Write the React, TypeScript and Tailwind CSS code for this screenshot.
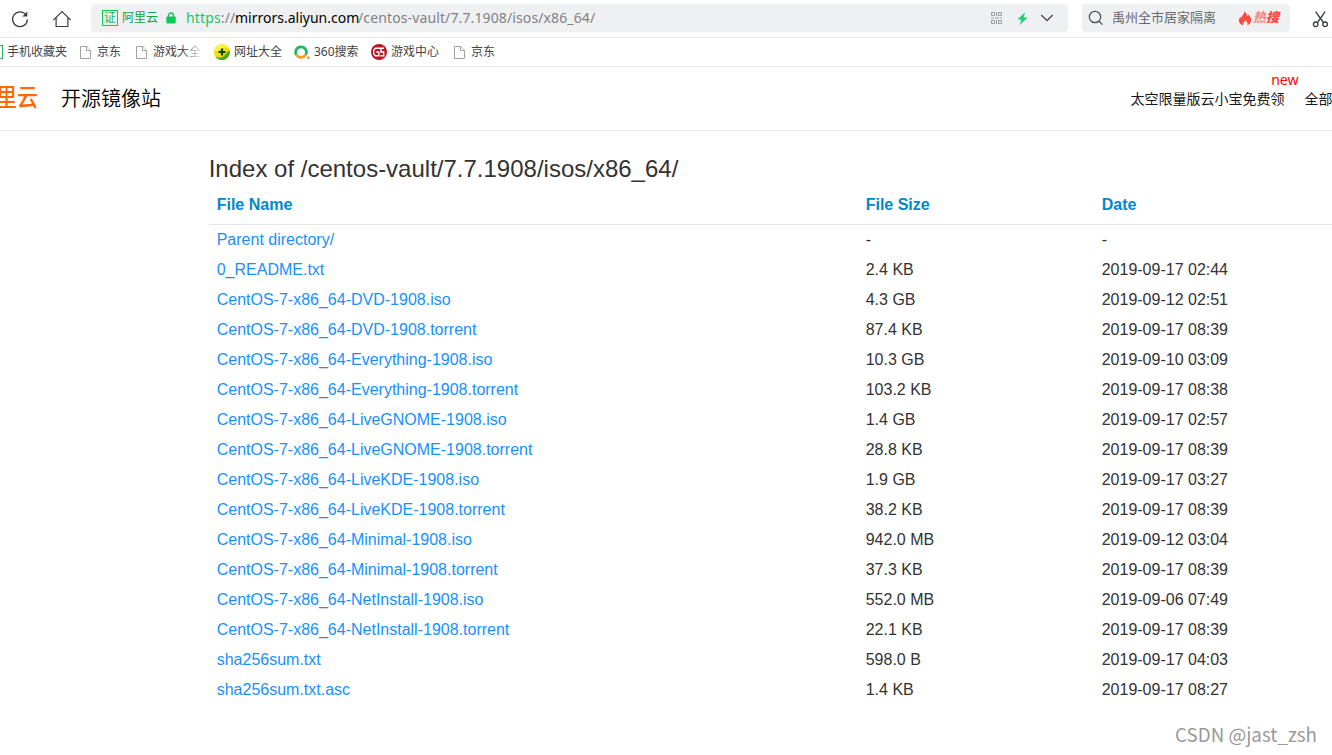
import type { ReactNode } from 'react'

interface FileRow {
  name: string
  size: string
  date: string
}

const files: FileRow[] = [
  { name: 'Parent directory/', size: '-', date: '-' },
  { name: '0_README.txt', size: '2.4 KB', date: '2019-09-17 02:44' },
  { name: 'CentOS-7-x86_64-DVD-1908.iso', size: '4.3 GB', date: '2019-09-12 02:51' },
  { name: 'CentOS-7-x86_64-DVD-1908.torrent', size: '87.4 KB', date: '2019-09-17 08:39' },
  { name: 'CentOS-7-x86_64-Everything-1908.iso', size: '10.3 GB', date: '2019-09-10 03:09' },
  { name: 'CentOS-7-x86_64-Everything-1908.torrent', size: '103.2 KB', date: '2019-09-17 08:38' },
  { name: 'CentOS-7-x86_64-LiveGNOME-1908.iso', size: '1.4 GB', date: '2019-09-17 02:57' },
  { name: 'CentOS-7-x86_64-LiveGNOME-1908.torrent', size: '28.8 KB', date: '2019-09-17 08:39' },
  { name: 'CentOS-7-x86_64-LiveKDE-1908.iso', size: '1.9 GB', date: '2019-09-17 03:27' },
  { name: 'CentOS-7-x86_64-LiveKDE-1908.torrent', size: '38.2 KB', date: '2019-09-17 08:39' },
  { name: 'CentOS-7-x86_64-Minimal-1908.iso', size: '942.0 MB', date: '2019-09-12 03:04' },
  { name: 'CentOS-7-x86_64-Minimal-1908.torrent', size: '37.3 KB', date: '2019-09-17 08:39' },
  { name: 'CentOS-7-x86_64-NetInstall-1908.iso', size: '552.0 MB', date: '2019-09-06 07:49' },
  { name: 'CentOS-7-x86_64-NetInstall-1908.torrent', size: '22.1 KB', date: '2019-09-17 08:39' },
  { name: 'sha256sum.txt', size: '598.0 B', date: '2019-09-17 04:03' },
  { name: 'sha256sum.txt.asc', size: '1.4 KB', date: '2019-09-17 08:27' },
]

function ReloadIcon() {
  return (
    <svg className="h-[18px] w-[18px]" viewBox="0 0 18 18" fill="none">
      <path d="M15.1 5A7.4 7.4 0 1 0 16.4 9.6" stroke="#3c3f44" strokeWidth="1.3" />
      <path d="M16.3 1.6v4.9h-4.9z" fill="#3c3f44" />
    </svg>
  )
}

function HomeIcon() {
  return (
    <svg className="h-[18px] w-[20px]" viewBox="0 0 20 18" fill="none" stroke="#3c3f44" strokeWidth="1.2">
      <path d="M1.3 10.1 10 1.6l8.7 8.5M4.1 7.8v8.7h11.8V7.8" />
    </svg>
  )
}

function LockIcon() {
  return (
    <svg className="h-[12px] w-[10px]" viewBox="0 0 10 12">
      <path d="M2.5 5V3.5a2.5 2.5 0 0 1 5 0V5" fill="none" stroke="#0ec95b" strokeWidth="1.4" />
      <rect x="0.3" y="4.6" width="9.4" height="6.8" rx="0.8" fill="#0ec95b" />
    </svg>
  )
}

function QrIcon() {
  return (
    <svg className="h-[12px] w-[12px]" viewBox="0 0 12 12" fill="none" stroke="#9a9c9f">
      <path d="M.5.5h3v3h-3zM7.5.5h3v3h-3zM.5 8.5h3v3h-3zM7.5 8.5h3v3h-3zM5.5 0v4M5.5 8v4M0 6h3M4 6h4M9 6h2" />
    </svg>
  )
}

function BoltIcon() {
  return (
    <svg className="h-[13px] w-[11px]" viewBox="0 0 11 13" fill="#16d37a">
      <path d="M8.2.3.3 7.6h4l-1.5 5.2 7.9-7.3H6.6z" />
    </svg>
  )
}

function SearchIcon() {
  return (
    <svg className="h-[16px] w-[16px]" viewBox="0 0 16 16" fill="none" stroke="#4a4c50" strokeWidth="1.2">
      <circle cx="7" cy="7" r="5.7" />
      <path d="m11 11.2 3.5 3.4" />
    </svg>
  )
}

function FireIcon() {
  return (
    <svg className="h-[15px] w-[14px]" viewBox="0 0 14 15">
      <path
        d="M6.3.5c2 1.3 2.9 3 2.6 4.7.7-.3 1.1-.9 1.2-1.7 2 1.7 3.3 3.8 3 6.1-.3 2.3-1.5 3.8-3.7 4.8.6-1.9-.1-3.5-1.8-5.4-.1 1-.7 1.5-1.5 2-1 .8-1.2 2-.8 3.4C2.5 13.6.9 12 .9 9.5c0-1.6.7-2.9 1.7-3.9 0 .9.3 1.5.8 1.8C3.5 4.5 6.3 3.5 6.3.5z"
        fill="#fb4a43"
      />
    </svg>
  )
}

function ScissorsIcon() {
  return (
    <svg className="h-[18px] w-[17px]" viewBox="0 0 17 18" fill="none" stroke="#3c3f44" strokeWidth="1.3">
      <path d="M3.6 1.7 11.4 12.5M13.2 1.7 5.4 12.5" />
      <circle cx="3.7" cy="14.3" r="2.3" />
      <circle cx="13.1" cy="14.3" r="2.3" />
    </svg>
  )
}

function PageIcon() {
  return (
    <svg className="h-[13px] w-[11px]" viewBox="0 0 11 13" fill="#fff" stroke="#a0a0a0">
      <path d="M.5.5h6.3L10.5 4.2v8.3H.5z" />
      <path d="M6.5.5v4h4" />
    </svg>
  )
}

function NavSiteIcon() {
  return (
    <svg className="h-[16px] w-[16px]" viewBox="0 0 16 16">
      <circle cx="8" cy="8" r="8" fill="#f2dd10" />
      <path d="M.2 6.3C1.5 2 5.5-.4 9.6.3c3 .5 5 2.3 5.9 4.7C12 2.7 8.5 3.3 6 5.6 4.3 7 2.2 7.3.2 6.3z" fill="#fff04a" />
      <path d="M15.8 6.5C16.5 11.5 12.5 16 8 16c-3 0-5.3-1.4-6.7-3.7 3.3 2 7 1.5 9.2-.9 1.6-1.8 3-3.7 5.3-4.9z" fill="#46a81c" />
      <path d="M8 4.5v7M4.5 8h7" stroke="#06480d" strokeWidth="2.2" />
    </svg>
  )
}

function So360Icon() {
  return (
    <svg className="h-[16px] w-[16px]" viewBox="0 0 16 16" fill="none" strokeWidth="2.7">
      <path d="M2.2 10.8A5.4 5.4 0 1 1 11.8 10.8" stroke="#19b766" />
      <path d="M2.2 10.4A5.4 5.4 0 0 0 11.8 10.4" stroke="#fa9a28" />
      <circle cx="14.4" cy="13.7" r="1.5" fill="#fa9a28" stroke="none" />
    </svg>
  )
}

function GameIcon() {
  return (
    <svg className="h-[16px] w-[16px]" viewBox="0 0 16 16" fill="none">
      <circle cx="8" cy="8" r="8" fill="#bd1522" />
      <path d="M13 4.2H4.5L2.7 6v4l1.8 1.8h3.3V8H5.3M10 4.2V8h2.7v3.8H9.3" stroke="#fff" strokeWidth="1.4" />
    </svg>
  )
}

function Bookmark({ icon, label, className }: { icon: ReactNode; label: string; className: string }) {
  return (
    <div className={`flex shrink-0 items-center whitespace-nowrap ${className}`}>
      {icon}
      <span>{label}</span>
    </div>
  )
}

function Toolbar() {
  return (
    <div className="flex h-[38px] items-start border-b border-[#ebebeb]">
      <div className="flex h-[37px] w-[91px] shrink-0 items-center gap-[23px] pl-[11px]">
        <ReloadIcon />
        <HomeIcon />
      </div>
      <div className="mt-1 flex h-[28px] w-[977px] shrink-0 items-center rounded bg-[#eff0f2] pl-[11px]">
        <span className="flex h-[16px] w-[16px] shrink-0 items-center justify-center border border-[#0ec95b] text-[12px] leading-none text-[#0eb956]">
          证
        </span>
        <span className="ml-1 text-[12px] text-[#14a04c]">阿里云</span>
        <span className="ml-[8px]">
          <LockIcon />
        </span>
        <div className="ml-[10px] flex flex-1 pb-[2px] text-[14px] text-[#7f8184]">
          <span className="w-[49px] shrink-0 tracking-[0.15px]">
            <span className="text-[#1cc568]">https</span>://
          </span>
          <span className="w-[123px] shrink-0 text-black">mirrors.aliyun.com</span>
          <span className="tracking-[0.12px]">/centos-vault/7.7.1908/isos/x86_64/</span>
        </div>
        <div className="flex items-center pr-[14px]">
          <QrIcon />
          <span className="ml-[14px]">
            <BoltIcon />
          </span>
          <svg className="ml-3 h-[8px] w-[14px]" viewBox="0 0 14 8" fill="none" stroke="#4a4c50" strokeWidth="1.3">
            <path d="m1.2 1 5.8 5.5L12.8 1" />
          </svg>
        </div>
      </div>
      <div className="mt-1 ml-[14px] flex h-[28px] w-[208px] shrink-0 items-center rounded bg-[#eff0f2] pl-[6px]">
        <SearchIcon />
        <span className="ml-2 text-[13px] text-[#66686b]">禹州全市居家隔离</span>
        <span className="ml-[22px]">
          <FireIcon />
        </span>
        <span className="ml-[1px] text-[13px] font-black text-[#fb4a43] italic">
          <span className="opacity-60">热</span>搜
        </span>
      </div>
      <div className="flex h-[37px] shrink-0 items-center pl-[22px]">
        <ScissorsIcon />
      </div>
    </div>
  )
}

function BookmarkBar() {
  return (
    <div className="flex h-[29px] items-center border-b border-[#ebebeb] text-[12px] text-[#444]">
      <Bookmark
        className="w-[80px] gap-1"
        icon={<span className="h-[14px] w-[3px] border border-l-0 border-[#22b25a]" />}
        label="手机收藏夹"
      />
      <Bookmark className="w-[56px] gap-[6px]" icon={<PageIcon />} label="京东" />
      <div className="relative w-[78px] shrink-0">
        <Bookmark className="gap-[6px]" icon={<PageIcon />} label="游戏大全" />
        <div className="absolute top-0 right-[13px] h-full w-[20px] bg-linear-to-r from-white/0 to-white/90" />
      </div>
      <Bookmark className="w-[80px] gap-1" icon={<NavSiteIcon />} label="网址大全" />
      <Bookmark className="w-[77px] gap-1" icon={<So360Icon />} label="360搜索" />
      <Bookmark className="w-[83px] gap-1" icon={<GameIcon />} label="游戏中心" />
      <Bookmark className="gap-[6px]" icon={<PageIcon />} label="京东" />
    </div>
  )
}

function SiteHeader() {
  return (
    <header className="flex h-[64px] items-center justify-between border-b border-[#ebebeb]">
      <div className="flex items-center">
        <div className="flex w-[61px] justify-end overflow-hidden pr-[23px] pb-[3px] whitespace-nowrap">
          <span className="origin-center scale-y-115 text-[21px] leading-[30px] font-medium text-[#ff6a00]">里云</span>
        </div>
        <span className="pt-[1px] text-[20px] leading-[30px] font-[350] text-black">开源镜像站</span>
      </div>
      <nav className="flex w-[201.5px] shrink-0 gap-5 text-[14px] leading-[36px] whitespace-nowrap text-[#181818]">
        <span className="relative shrink-0">
          太空限量版云小宝免费领
          <sup className="absolute -top-[8px] -right-[14px] text-[14px] leading-[14px] text-[#ff0000]">new</sup>
        </span>
        <span className="shrink-0">全部</span>
      </nav>
    </header>
  )
}

export default function App() {
  return (
    <div className="relative h-[755px] w-[1332px] overflow-hidden bg-white font-['Noto_Sans','Noto_Sans_CJK_SC',sans-serif] font-normal">
      <Toolbar />
      <BookmarkBar />
      <SiteHeader />

      <main className="pt-[22px] pl-[208.7px] font-['Liberation_Sans',sans-serif] text-[#333]">
        <h1 className="text-[24px] leading-8">Index of /centos-vault/7.7.1908/isos/x86_64/</h1>
        <table className="w-[1180px] table-fixed border-separate border-spacing-0 text-[16px] leading-5">
          <thead>
            <tr className="h-[40px] text-left text-[#0088cc]">
              <th className="w-[649px] border-b border-[#e6e6e6] px-2 font-bold">File Name</th>
              <th className="w-[236px] border-b border-[#e6e6e6] px-2 font-bold">File Size</th>
              <th className="border-b border-[#e6e6e6] px-2 font-bold">Date</th>
            </tr>
          </thead>
          <tbody>
            {files.map((file) => (
              <tr key={file.name} className="h-[30px]">
                <td className="px-2 whitespace-nowrap text-[#1890ff]">
                  <a href="#">{file.name}</a>
                </td>
                <td className="px-2 whitespace-nowrap">{file.size}</td>
                <td className="px-2 whitespace-nowrap">{file.date}</td>
              </tr>
            ))}
          </tbody>
        </table>
      </main>

      <div className="absolute right-[15px] bottom-[7px] font-['Noto_Sans_CJK_SC',sans-serif] text-[18.8px] leading-[28px] text-[#999]">
        CSDN @jast_zsh
      </div>
    </div>
  )
}
